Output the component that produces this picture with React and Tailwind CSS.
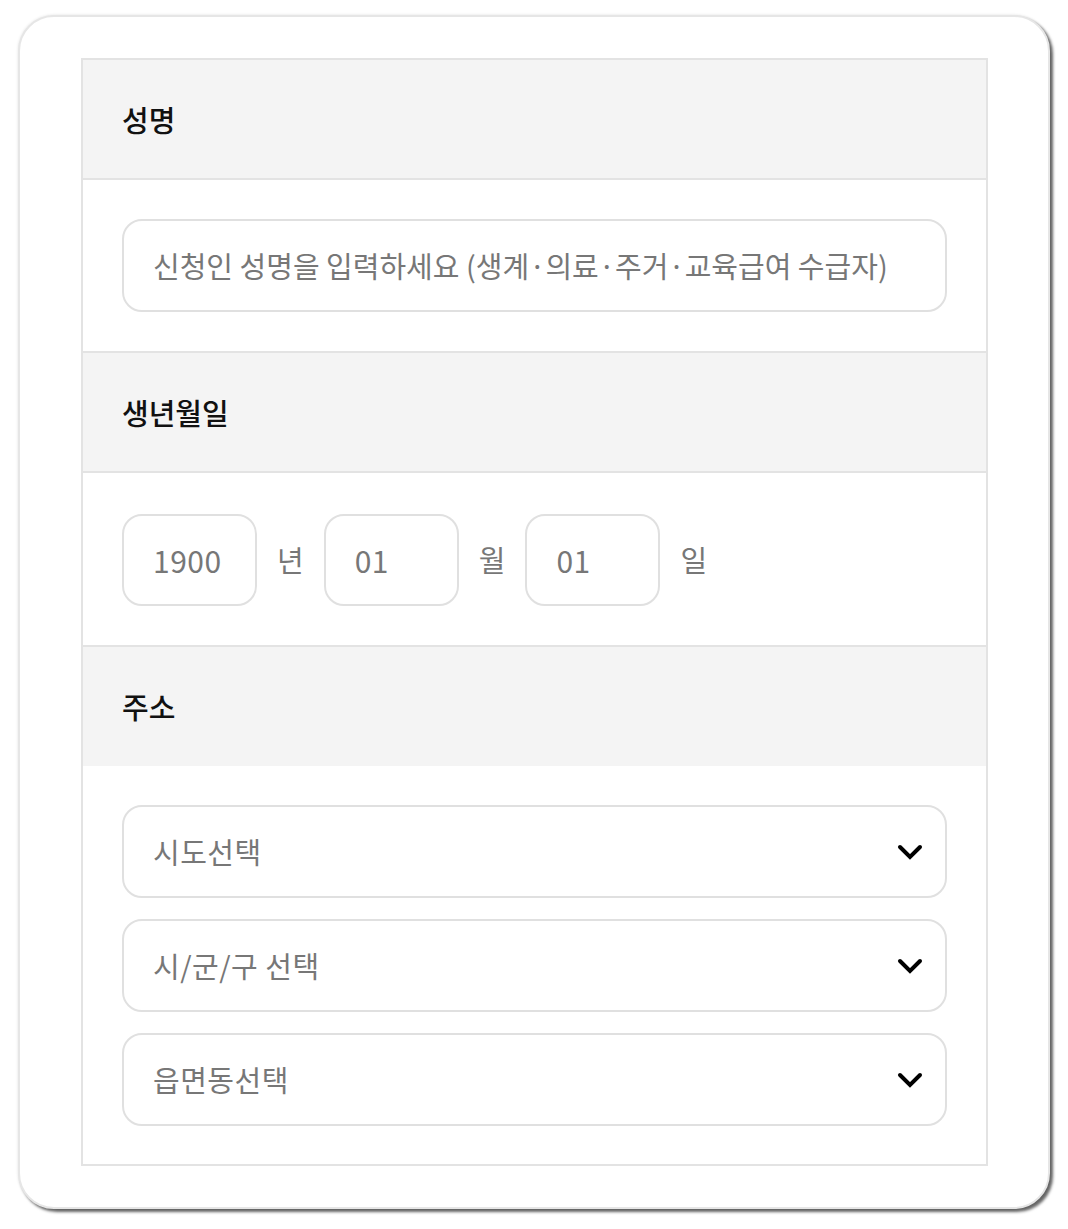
import React from "react";

function Chevron() {
  return (
    <svg width="26" height="18" viewBox="0 0 26 18" className="shrink-0">
      <path d="M3 4 L13 14 L23 4" fill="none" stroke="#000" strokeWidth="4" strokeLinecap="round" strokeLinejoin="miter" />
    </svg>
  );
}

function Header({ children, last }) {
  return (
    <div className={"bg-[#f4f4f4] flex items-center px-[39px] " + (last ? "h-[119px]" : "h-[120px] border-b-2 border-[#e3e3e3]")}>
      <span className="text-[29px] font-medium text-[#111] leading-none">{children}</span>
    </div>
  );
}

function Select({ label }) {
  return (
    <div className="h-[93px] rounded-[20px] border-2 border-[#e0e0e0] flex items-center justify-between pl-[29px] pr-[22px] bg-white">
      <span className="text-[29px] tracking-[0.5px] text-[#777]">{label}</span>
      <Chevron />
    </div>
  );
}

function DateBox({ value }) {
  return (
    <div className="w-[135px] h-[92px] rounded-[20px] border-2 border-[#e0e0e0] flex items-center pl-[29px] bg-white">
      <span className="text-[30px] tracking-[0.5px] text-[#777]">{value}</span>
    </div>
  );
}

export default function App() {
  return (
    <div className="w-[1068px] h-[1229px] bg-white pt-[15px] px-[18px] font-['Noto_Sans_CJK_KR','Noto_Sans',sans-serif]">
      <div className="h-[1194px] rounded-[36px] bg-white border-2 border-[#e6e6e6] shadow-[3px_3px_3px_rgba(0,0,0,0.6),0_0_3px_rgba(0,0,0,0.12)] pl-[61px] pr-[60px] pt-[41px]">
        <div className="border-2 border-[#e3e3e3]">
          <Header>성명</Header>
          <div className="pt-[39px] pb-[39px] px-[39px] border-b-2 border-[#e3e3e3]">
            <div className="h-[93px] rounded-[20px] border-2 border-[#e0e0e0] flex items-center pl-[29px]">
              <span className="text-[29px] text-[#777] whitespace-nowrap">신청인 성명을 입력하세요 (생계·의료·주거·교육급여 수급자)</span>
            </div>
          </div>
          <Header>생년월일</Header>
          <div className="pt-[41px] pb-[39px] px-[39px] border-b-2 border-[#e3e3e3] flex items-center">
            <DateBox value="1900" />
            <span className="text-[29px] text-[#777] mx-[20px]">년</span>
            <DateBox value="01" />
            <span className="text-[29px] text-[#777] mx-[20px]">월</span>
            <DateBox value="01" />
            <span className="text-[29px] text-[#777] mx-[20px]">일</span>
          </div>
          <Header last>주소</Header>
          <div className="pt-[39px] pb-[38px] px-[39px] flex flex-col gap-[21px]">
            <Select label="시도선택" />
            <Select label="시/군/구 선택" />
            <Select label="읍면동선택" />
          </div>
        </div>
      </div>
    </div>
  );
}
